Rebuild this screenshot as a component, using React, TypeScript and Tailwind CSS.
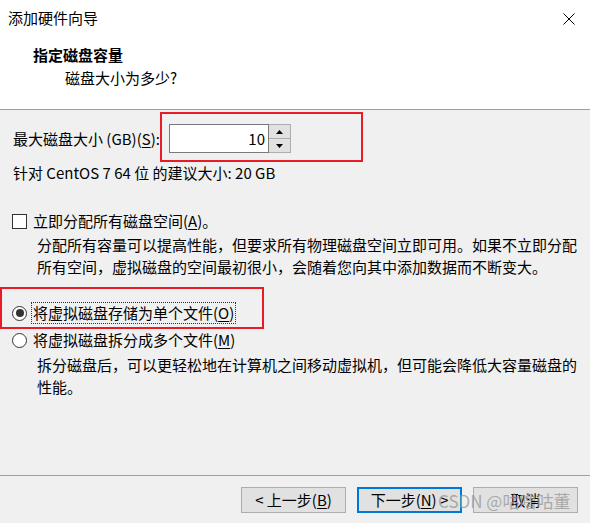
import React from "react";

const U = ({ children }: { children: React.ReactNode }) => (
  <span className="underline underline-offset-2">{children}</span>
);

export default function App() {
  return (
    <div
      className="relative w-[590px] h-[523px] bg-[#f0f0f0] flex flex-col text-[15px] text-black overflow-hidden"
      style={{ fontFamily: '"Noto Sans CJK SC", "Noto Sans", sans-serif' }}
    >
      {/* header */}
      <div className="bg-white h-[110px] border-b border-[#a0a0a0] flex flex-col">
        <div className="h-[36px] flex items-center justify-between pl-[8px] pr-[15px]">
          <span className="leading-[20px]">添加硬件向导</span>
          <svg width="12" height="12" viewBox="0 0 12 12" className="mt-[1px]">
            <path d="M0.5 0.5 L11.5 11.5 M11.5 0.5 L0.5 11.5" stroke="#000" strokeWidth="1" fill="none" />
          </svg>
        </div>
        <div className="pl-[33px] mt-[9px] leading-[20px] font-bold">指定磁盘容量</div>
        <div className="pl-[65px] mt-[3px] leading-[20px]">磁盘大小为多少?</div>
      </div>

      {/* body */}
      <div className="flex-1 flex flex-col px-[12px]">
        <div className="mt-[14px] h-[29px] flex items-center">
          <span className="ml-[1px] leading-[20px] w-[156px]">
            最大磁盘大小 (GB)(<U>S</U>):
          </span>
          <div className="flex h-[29px]">
            <div className="w-[100px] h-[29px] bg-white border border-[#7a7a7a] flex items-center justify-end pr-[3px] leading-[20px]">
              10
            </div>
            <div className="w-[22px] h-[29px] flex flex-col border border-[#adadad] border-l-0">
              <div className="flex-1 bg-[#e1e1e1] border-b border-[#adadad] flex items-center justify-center">
                <svg width="7" height="4" viewBox="0 0 7 4"><path d="M3.5 0 L7 4 L0 4 Z" fill="#000" /></svg>
              </div>
              <div className="flex-1 bg-[#e1e1e1] flex items-center justify-center">
                <svg width="7" height="4" viewBox="0 0 7 4"><path d="M0 0 L7 0 L3.5 4 Z" fill="#000" /></svg>
              </div>
            </div>
          </div>
        </div>

        <div className="mt-[10px] ml-[1px] leading-[20px]">针对 CentOS 7 64 位 的建议大小: 20 GB</div>

        <div className="mt-[28px] h-[20px] flex items-center">
          <div className="w-[15px] h-[15px] bg-white border border-[#333]" />
          <span className="ml-[6px] leading-[20px]">
            立即分配所有磁盘空间(<U>A</U>)。
          </span>
        </div>
        <div className="mt-[3px] ml-[25px] leading-[22px]">
          <div>分配所有容量可以提高性能，但要求所有物理磁盘空间立即可用。如果不立即分配</div>
          <div>所有空间，虚拟磁盘的空间最初很小，会随着您向其中添加数据而不断变大。</div>
        </div>

        <div className="mt-[23px] h-[24px] flex items-center">
          <div className="w-[15px] h-[15px] rounded-full bg-white border border-[#333] flex items-center justify-center">
            <div className="w-[8px] h-[8px] rounded-full bg-[#333]" />
          </div>
          <span className="ml-[4px] px-[1px] leading-[20px] border border-dotted border-[#333]">
            将虚拟磁盘存储为单个文件(<U>O</U>)
          </span>
        </div>
        <div className="mt-[3px] h-[24px] flex items-center">
          <div className="w-[15px] h-[15px] rounded-full bg-white border border-[#333]" />
          <span className="ml-[5px] px-[1px] leading-[20px]">
            将虚拟磁盘拆分成多个文件(<U>M</U>)
          </span>
        </div>
        <div className="mt-[2px] ml-[25px] leading-[22px]">
          <div>拆分磁盘后，可以更轻松地在计算机之间移动虚拟机，但可能会降低大容量磁盘的</div>
          <div>性能。</div>
        </div>
      </div>

      {/* footer */}
      <div className="h-[48px] border-t border-[#a0a0a0] flex justify-end items-start pt-[11px] pr-[12px] gap-[11px]">
        <div className="w-[105px] h-[26px] bg-[#e1e1e1] border border-[#adadad] flex items-center justify-center leading-[20px]">
          &lt; 上一步(<U>B</U>)
        </div>
        <div className="w-[105px] h-[26px] bg-[#e1e1e1] border-2 border-[#0078d7] flex items-center justify-center leading-[20px]">
          下一步(<U>N</U>) &gt;
        </div>
        <div className="w-[105px] h-[26px] bg-[#e1e1e1] border border-[#adadad] flex items-center justify-center leading-[20px]">
          取消
        </div>
      </div>

      {/* annotations */}
      <div className="absolute left-[160px] top-[112px] w-[203px] h-[50px] border-2 border-[#e81c24]" />
      <div className="absolute left-0 top-[287px] w-[264px] h-[42px] border-2 border-[#e81c24]" />
      <div className="absolute left-[438px] top-[490px] text-[17px] leading-[22px] text-[#9a9a9a]/80 whitespace-nowrap">
        CSDN @咕噜咕董
      </div>
    </div>
  );
}
